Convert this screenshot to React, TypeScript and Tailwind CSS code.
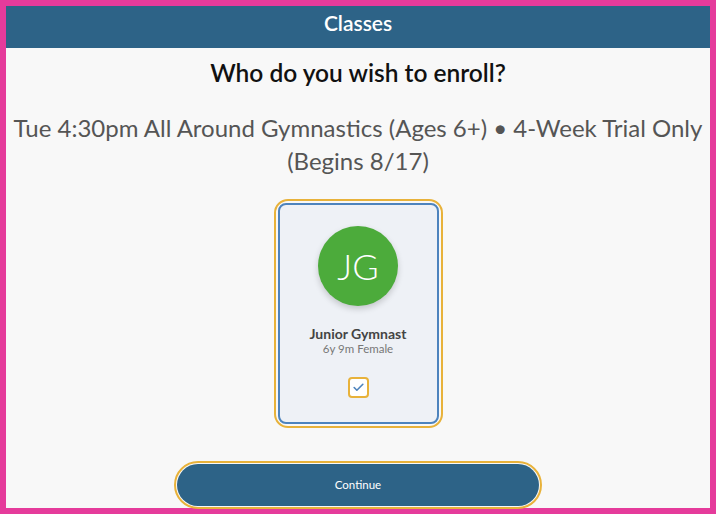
import { Check } from "lucide-react";

export default function App() {
  return (
    <div className="h-[514px] w-full border-[6px] border-[#e53b9b] bg-[#f8f8f8] font-['Lato',sans-serif] flex flex-col items-center">
      {/* header */}
      <div className="flex h-[42px] w-full shrink-0 justify-center bg-[#2d6387] pt-[4px]">
        <h1 className="text-[21px] leading-[26px] font-semibold text-white">Classes</h1>
      </div>

      <h2 className="mt-[11px] text-[24.5px] leading-[28px] font-semibold text-[#111]">
        Who do you wish to enroll?
      </h2>

      <p className="mt-[24px] whitespace-nowrap text-center text-[24px] leading-[33px] text-[#555]">
        Tue 4:30pm All Around Gymnastics (Ages 6+) • 4-Week Trial Only
        <br />
        (Begins 8/17)
      </p>

      {/* student card */}
      <div className="mt-[26px] rounded-[10px] outline-2 outline-offset-2 outline-[#e8b23a]">
        <div className="flex h-[221px] w-[161px] flex-col items-center rounded-[8px] border-2 border-[#4d83bd] bg-[#eef1f6]">
          <div className="mt-[21px] flex h-[80px] w-[80px] items-center justify-center rounded-full bg-[#4cab3b] shadow-[0_3px_6px_rgba(0,0,0,0.18)]">
            <span className="text-[36px] font-light text-white">JG</span>
          </div>
          <div className="mt-[20px] text-[14px] leading-[16px] font-bold text-[#444]">
            Junior Gymnast
          </div>
          <div className="text-[11.5px] leading-[13px] text-[#777]">6y 9m Female</div>
          <div className="mt-[22px] flex h-[21px] w-[21px] items-center justify-center rounded-[4px] border-2 border-[#e8b23a] bg-white">
            <Check className="h-[13px] w-[13px] text-[#4d83bd]" strokeWidth={3} />
          </div>
        </div>
      </div>

      {/* continue */}
      <div className="mt-auto mb-[2px] rounded-full outline-2 outline-offset-1 outline-[#e8b23a]">
        <button className="flex h-[42px] w-[362px] items-center justify-center rounded-full bg-[#2d6387] text-[11.5px] text-white">
          Continue
        </button>
      </div>
    </div>
  );
}
